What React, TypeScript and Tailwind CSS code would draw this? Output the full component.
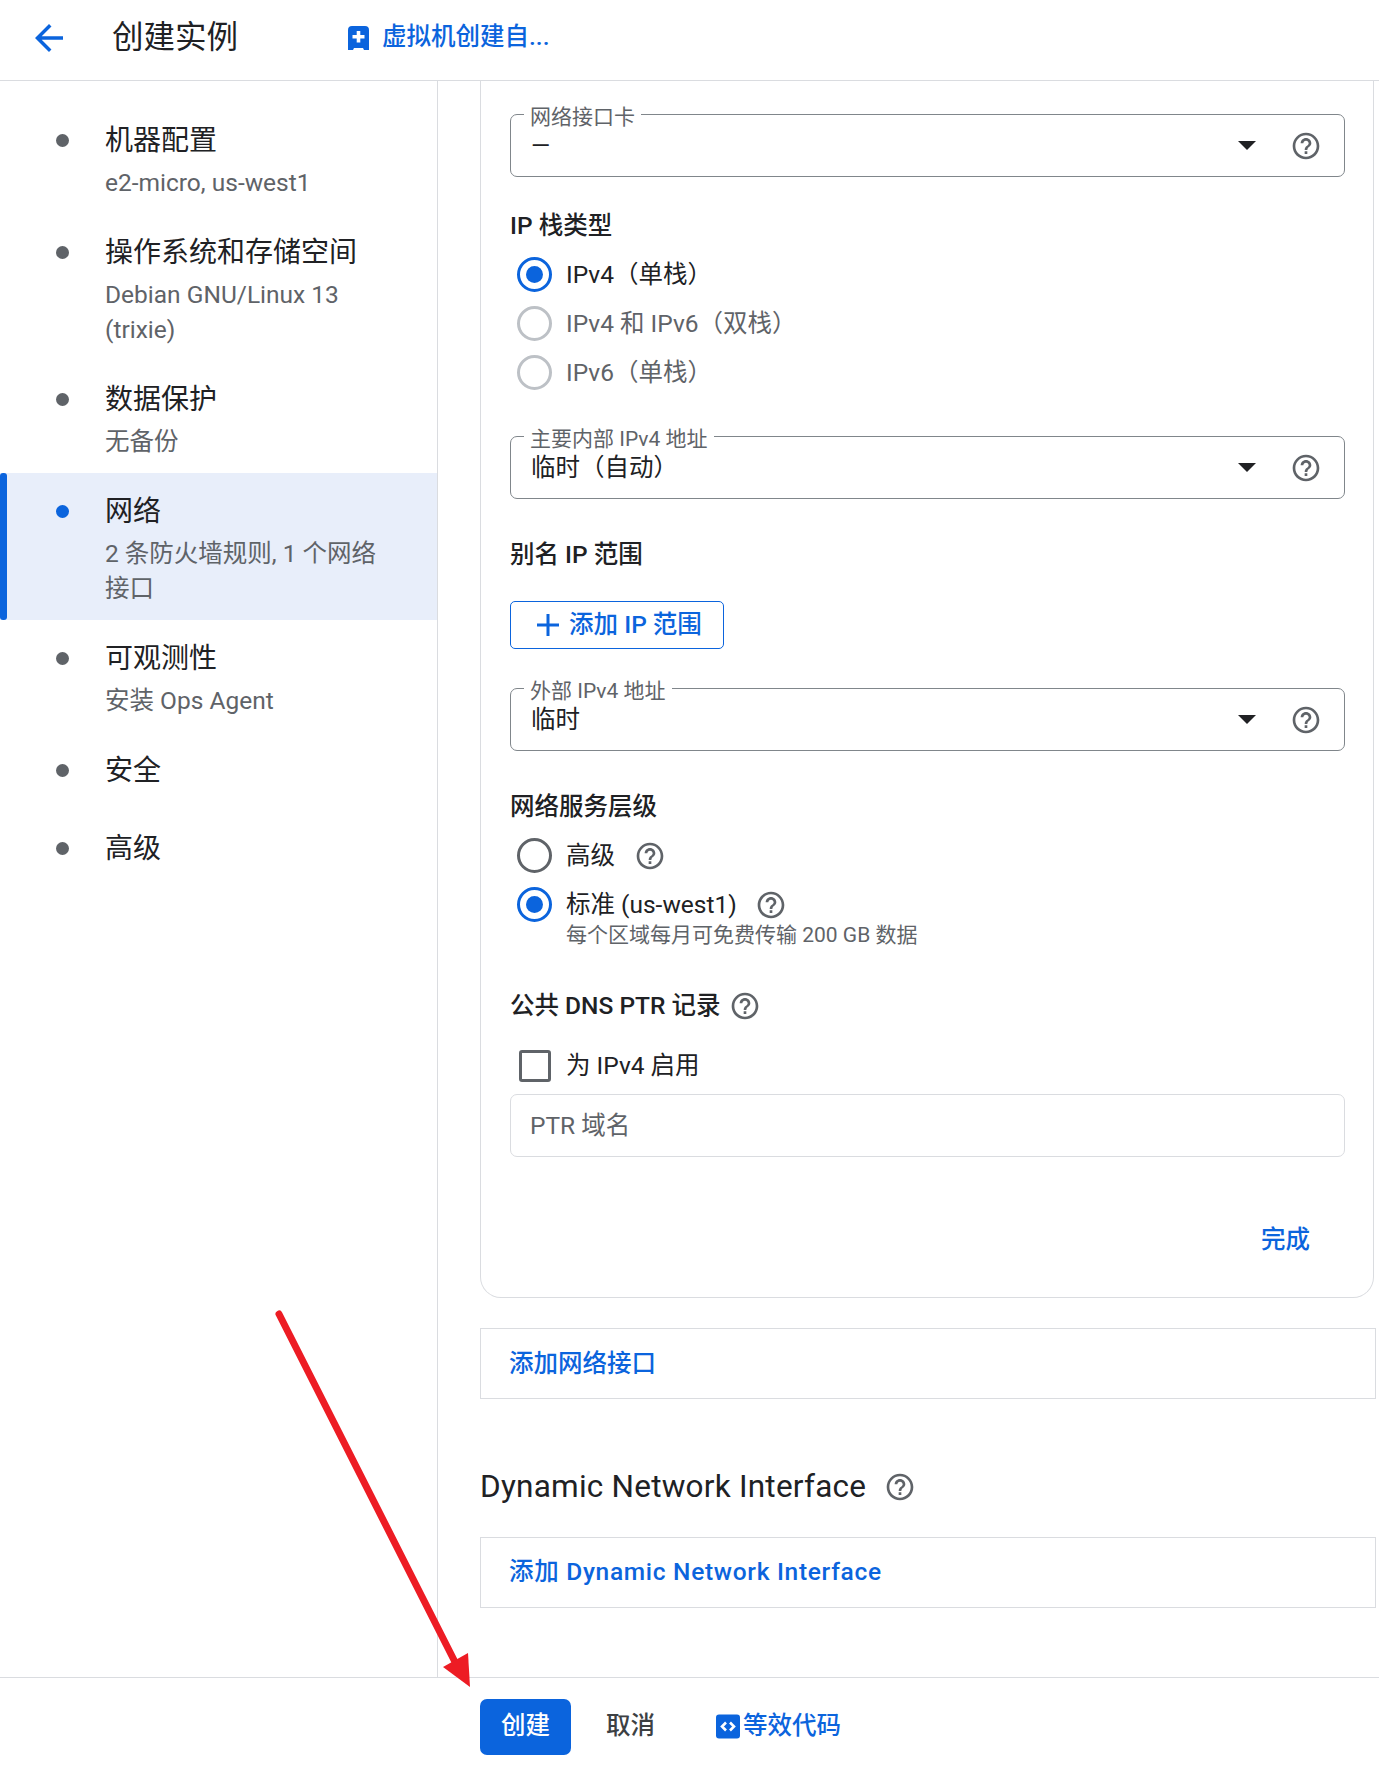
const blue = "text-[#0b64dd]";

function HelpIcon({ className }: { className?: string }) {
  return (
    <svg viewBox="0 0 24 24" className={"h-[32px] w-[32px] shrink-0 fill-[#5f6368] " + (className ?? "")}>
      <path d="M11 18h2v-2h-2v2zm1-16C6.48 2 2 6.48 2 12s4.48 10 10 10 10-4.48 10-10S17.52 2 12 2zm0 18c-4.41 0-8-3.59-8-8s3.59-8 8-8 8 3.59 8 8-3.59 8-8 8zm0-14c-2.21 0-4 1.79-4 4h2c0-1.1.9-2 2-2s2 .9 2 2c0 2-3 1.75-3 5h2c0-2.25 3-2.5 3-5 0-2.21-1.79-4-4-4z" />
    </svg>
  );
}

function NavItem(props: { title: string; sub?: string[]; active?: boolean }) {
  return (
    <div className={"relative flex pl-[105px] pr-[40px] pt-[18px] " + (props.sub ? "pb-[14px] " : "pb-[18px] ") + (props.active ? "bg-[#e8eefa]" : "")}>
      {props.active && <div className="absolute left-0 top-0 h-full w-[7px] rounded-[3px] bg-[#0b64dd]" />}
      <div className={"absolute left-[56px] top-[32px] h-[13px] w-[13px] rounded-full " + (props.active ? "bg-[#0b64dd]" : "bg-[#5f6368]")} />
      <div>
        <div className="text-[28px] leading-[42px] text-[#202124]">{props.title}</div>
        {props.sub && (
          <div className="mt-[3px] text-[24.5px] leading-[35px] text-[#5f6368]">
            {props.sub.map((line) => (
              <div key={line}>{line}</div>
            ))}
          </div>
        )}
      </div>
    </div>
  );
}

function SelectField({ label, value, top }: { label: string; value: string; top: string }) {
  return (
    <div className={"relative flex h-[63px] items-center rounded-[7px] border border-[#80868b] pl-[20px] pr-[22px] " + top}>
      <span className="absolute left-[13px] top-[-12px] bg-white px-[6px] text-[21px] leading-[28px] text-[#5f6368]">{label}</span>
      <span className="flex-1 text-[24.5px] leading-[36px] text-[#202124]">{value}</span>
      <div className="mr-[34px] h-0 w-0 border-x-[9px] border-t-[9px] border-x-transparent border-t-[#202124]" />
      <HelpIcon />
    </div>
  );
}

function Radio(props: { label: string; checked?: boolean; disabled?: boolean; children?: React.ReactNode }) {
  return (
    <div className="flex h-[49px] items-center pl-[7px]">
      <div
        className={
          "flex h-[35px] w-[35px] shrink-0 items-center justify-center rounded-full border-[3.5px] " +
          (props.checked ? "border-[#0b64dd]" : props.disabled ? "border-[#bdc1c6]" : "border-[#5f6368]")
        }
      >
        {props.checked && <div className="h-[17px] w-[17px] rounded-full bg-[#0b64dd]" />}
      </div>
      <span className={"ml-[14px] text-[24.5px] leading-[36px] " + (props.disabled ? "text-[#5f6368]" : "text-[#202124]")}>{props.label}</span>
      {props.children}
    </div>
  );
}

function SectionTitle({ text, top, children }: { text: string; top: string; children?: React.ReactNode }) {
  return (
    <div className={"flex items-center text-[24.5px] font-medium leading-[36px] text-[#202124] " + top}>
      {text}
      {children}
    </div>
  );
}

export default function App() {
  return (
    <div
      className="relative flex h-[1765px] w-[1379px] flex-col overflow-hidden bg-white"
      style={{ fontFamily: 'Roboto, "Noto Sans CJK SC", sans-serif' }}
    >
      <header className="flex h-[81px] shrink-0 items-center border-b border-[#dadce0] pb-[5px]">
        <svg viewBox="0 0 24 24" className="ml-[28px] h-[42px] w-[42px] fill-[#0b64dd]">
          <path d="M20 11H7.83l5.59-5.59L12 4l-8 8 8 8 1.41-1.41L7.83 13H20v-2z" />
        </svg>
        <h1 className="ml-[42px] text-[31.5px] font-normal text-[#202124]">创建实例</h1>
        <svg viewBox="0 0 21 24" className="ml-[110px] h-[24px] w-[21px] fill-[#0b64dd]">
          <path fillRule="evenodd" d="M4 0h13a4 4 0 0 1 4 4v20h-5l-1-2H6l-1 2H0V4a4 4 0 0 1 4-4zm4.700 5v4H4.500v3.500h4.200v4h3.600v-4h4.200V9h-4.200V5z" />
        </svg>
        <span className={"ml-[13px] text-[24.5px] font-medium " + blue}>虚拟机创建自...</span>
      </header>

      <div className="flex min-h-0 flex-1">
        <nav className="w-[438px] shrink-0 border-r border-[#dadce0] pt-[21px]">
          <NavItem title="机器配置" sub={["e2-micro, us-west1"]} />
          <NavItem title="操作系统和存储空间" sub={["Debian GNU/Linux 13", "(trixie)"]} />
          <NavItem title="数据保护" sub={["无备份"]} />
          <NavItem title="网络" sub={["2 条防火墙规则, 1 个网络", "接口"]} active />
          <NavItem title="可观测性" sub={["安装 Ops Agent"]} />
          <NavItem title="安全" />
          <NavItem title="高级" />
        </nav>

        <main className="flex-1 pl-[42px] pr-[3px]">
          <div className="mr-[2px] rounded-b-[21px] border-x border-b border-[#dadce0] pb-[39px] pl-[29px] pr-[28px] pt-[33px]">
            <SelectField label="网络接口卡" value="—" top="" />
            <SectionTitle text="IP 栈类型" top="mt-[31px]" />
            <div className="mt-[6px]">
              <Radio label="IPv4（单栈）" checked />
              <Radio label="IPv4 和 IPv6（双栈）" disabled />
              <Radio label="IPv6（单栈）" disabled />
            </div>
            <SelectField label="主要内部 IPv4 地址" value="临时（自动）" top="mt-[39px]" />
            <SectionTitle text="别名 IP 范围" top="mt-[38px]" />
            <button className={"mt-[28px] flex h-[48px] w-[214px] items-center justify-center rounded-[5px] border border-[#0b64dd] pl-[4px] text-[24.5px] font-medium " + blue}>
              <svg viewBox="0 0 24 24" className="mr-[9px] h-[24px] w-[24px] fill-[#0b64dd]">
                <path d="M10.5 1h3v9.500H23v3h-9.500V23h-3v-9.500H1v-3h9.500z" />
              </svg>
              添加 IP 范围
            </button>
            <SelectField label="外部 IPv4 地址" value="临时" top="mt-[39px]" />
            <SectionTitle text="网络服务层级" top="mt-[38px]" />
            <div className="mt-[6px]">
              <Radio label="高级">
                <HelpIcon className="ml-[19px]" />
              </Radio>
              <Radio label="标准 (us-west1)" checked>
                <HelpIcon className="ml-[18px]" />
              </Radio>
            </div>
            <div className="-mt-[8px] pl-[56px] text-[21px] leading-[28px] text-[#5f6368]">每个区域每月可免费传输 200 GB 数据</div>
            <SectionTitle text="公共 DNS PTR 记录" top="mt-[39px]">
              <HelpIcon className="ml-[9px]" />
            </SectionTitle>
            <div className="mt-[17px] flex h-[49px] items-center pl-[9px]">
              <div className="h-[32px] w-[32px] shrink-0 rounded-[3px] border-[3.5px] border-[#5f6368]" />
              <span className="ml-[15px] text-[24.5px] leading-[36px] text-[#202124]">为 IPv4 启用</span>
            </div>
            <div className="mt-[4px] flex h-[63px] items-center rounded-[7px] border border-[#dadce0] pl-[19px] pt-[1px] text-[24.5px] text-[#5f6368]">PTR 域名</div>
            <div className="mt-[65px] flex justify-end pr-[35px]">
              <span className={"text-[24.5px] font-medium leading-[36px] " + blue}>完成</span>
            </div>
          </div>

          <div className={"mt-[30px] flex h-[71px] items-center border border-[#dadce0] pl-[28px] pt-[1px] text-[24.5px] font-medium " + blue}>添加网络接口</div>

          <div className="mt-[66px] flex h-[44px] items-center text-[31.5px] tracking-[0.23px] text-[#202124]">
            Dynamic Network Interface
            <HelpIcon className="ml-[18px]" />
          </div>

          <div className={"mt-[28px] flex h-[71px] items-center border border-[#dadce0] pl-[28px] text-[24.5px] font-medium tracking-[0.7px] " + blue}>添加 Dynamic Network Interface</div>
        </main>
      </div>

      <footer className="flex h-[88px] shrink-0 items-center border-t border-[#dadce0] pl-[480px] pt-[10px]">
        <button className="h-[56px] w-[91px] rounded-[7px] bg-[#0b64dd] text-[24.5px] font-medium text-white">创建</button>
        <span className="ml-[35px] text-[24.5px] font-medium text-[#3c4043]">取消</span>
        <svg viewBox="0 0 24 24" className="ml-[61px] h-[25px] w-[24px]">
          <rect width="24" height="24" rx="3" fill="#0b64dd" />
          <path d="M10 8 6 12l4 4M14 8l4 4-4 4" fill="none" stroke="#fff" strokeWidth="2.600" />
        </svg>
        <span className={"ml-[3px] text-[24.5px] font-medium " + blue}>等效代码</span>
      </footer>

      <svg viewBox="0 0 1379 1765" className="pointer-events-none absolute left-0 top-0 h-[1765px] w-[1379px]">
        <line x1="279" y1="1314" x2="456" y2="1664" stroke="#ed1c24" strokeWidth="7" strokeLinecap="round" />
        <polygon points="470,1687 468,1653 443,1667" fill="#ed1c24" />
      </svg>
    </div>
  );
}
